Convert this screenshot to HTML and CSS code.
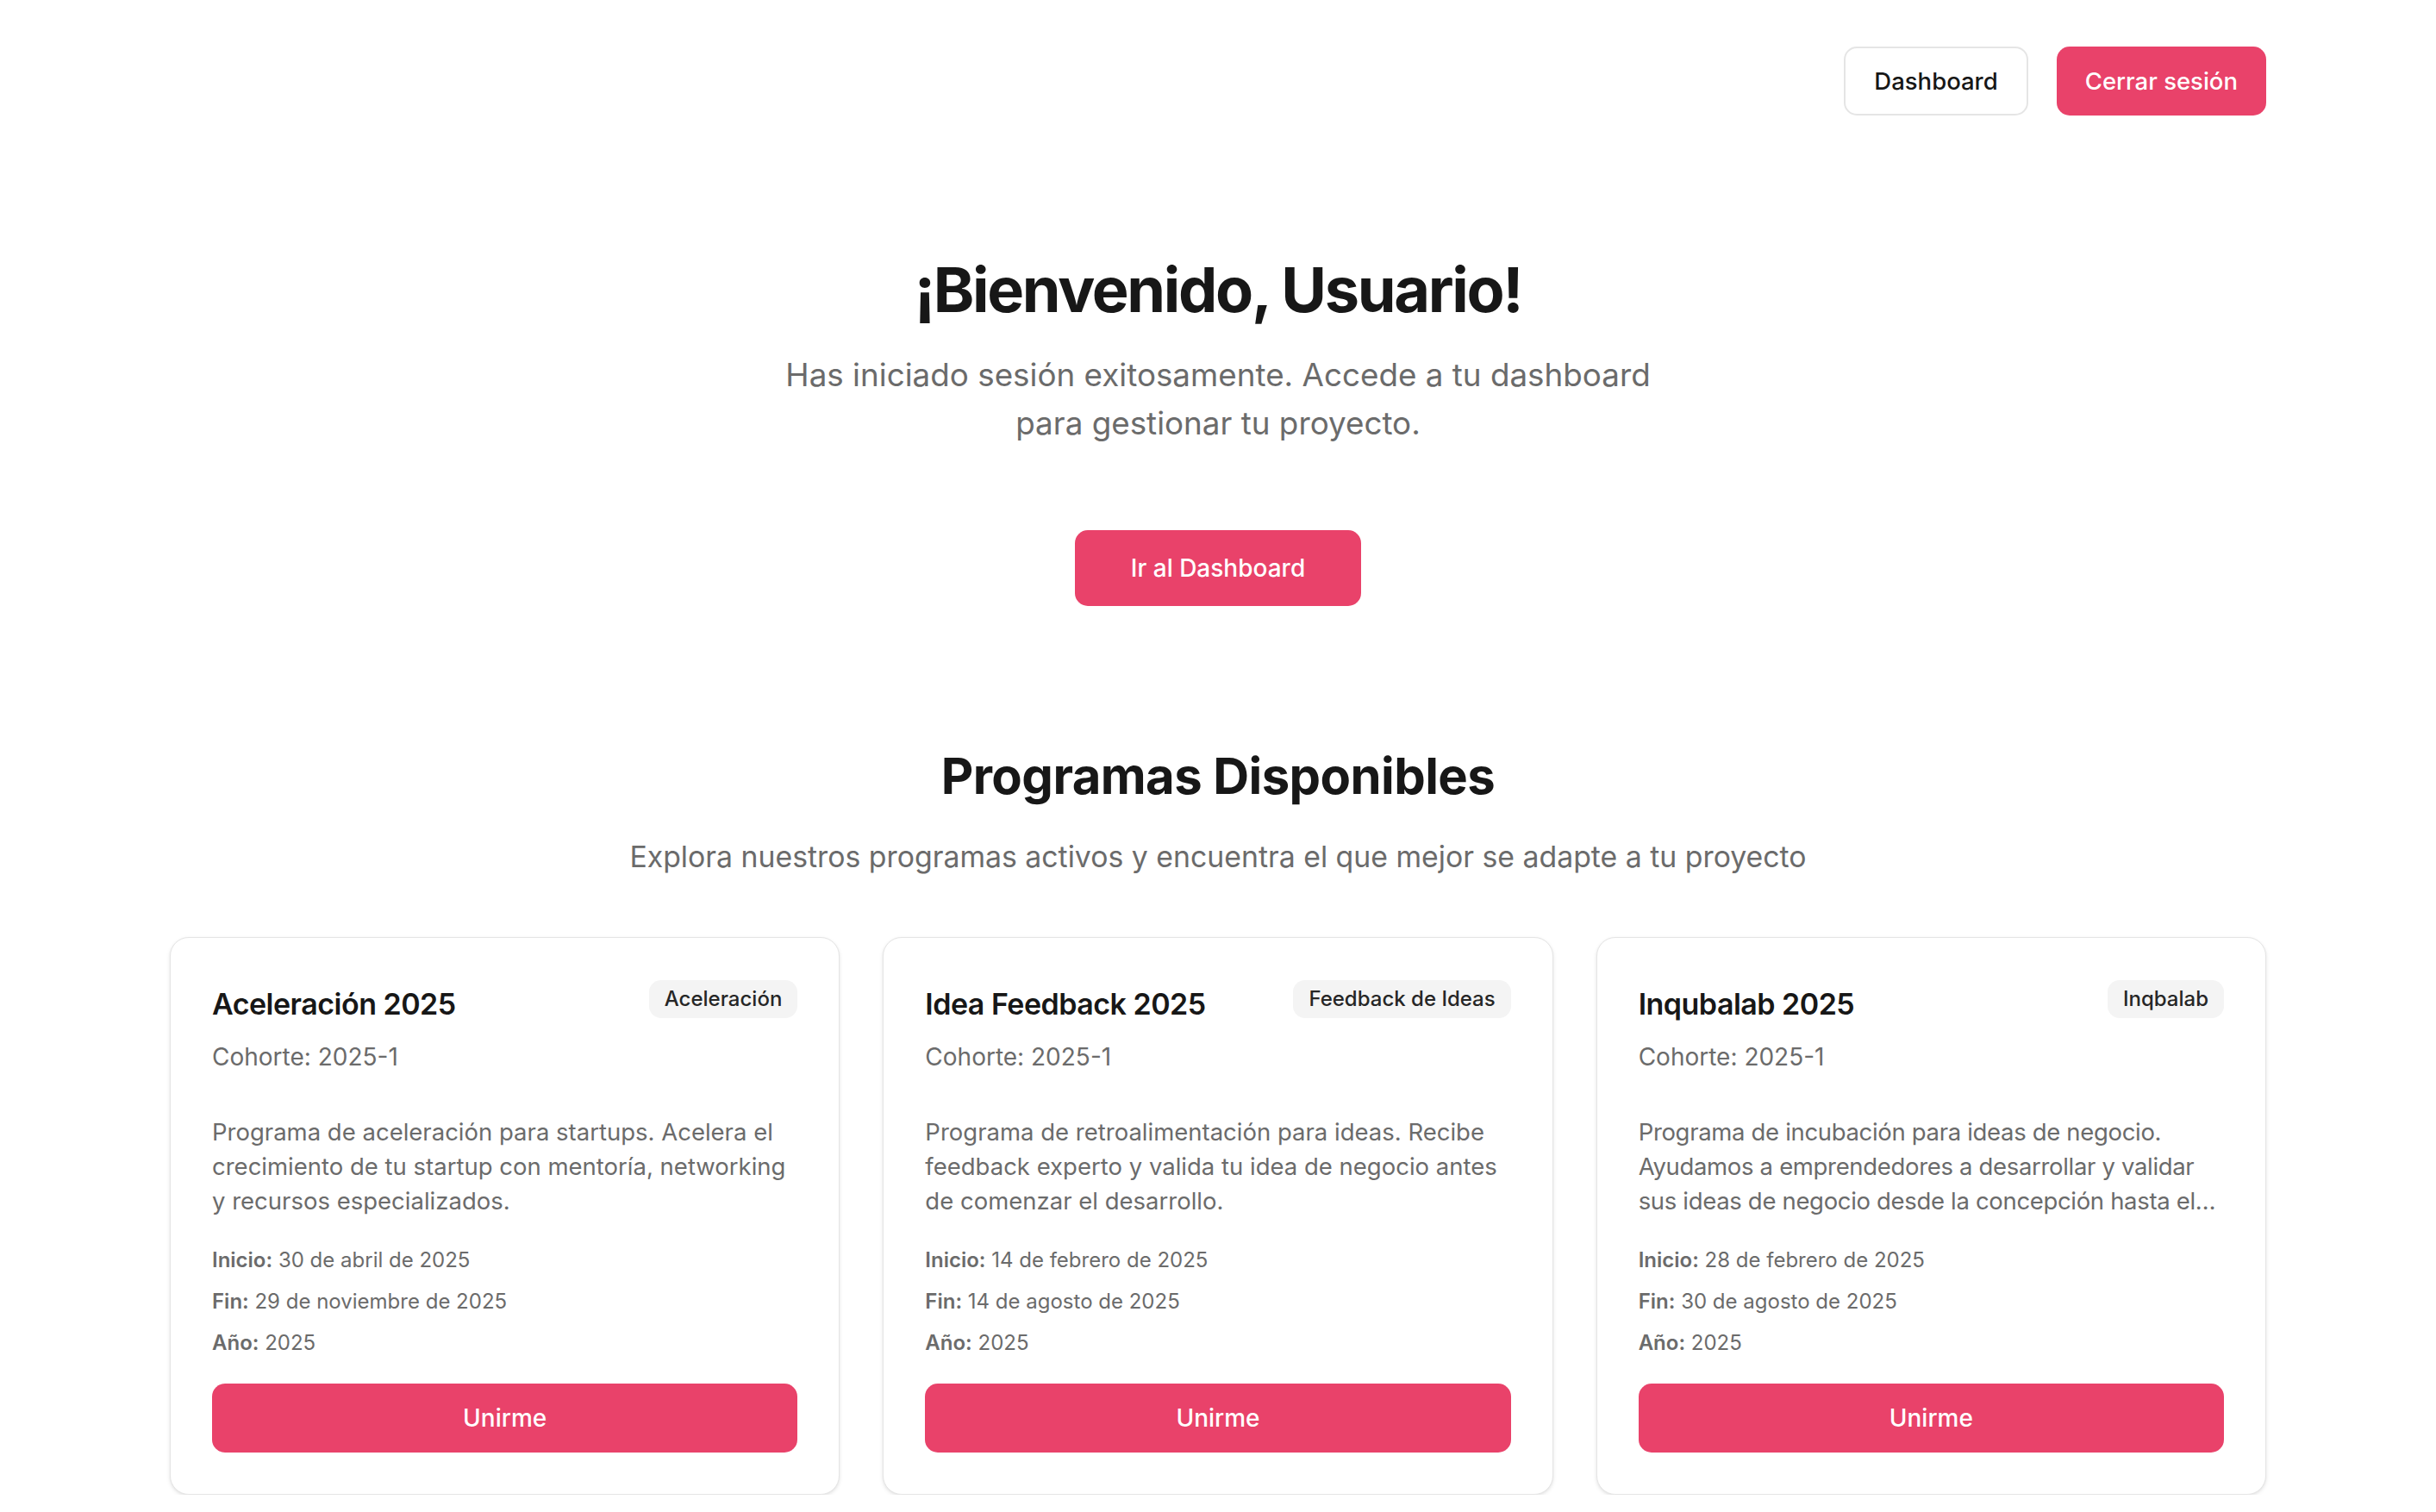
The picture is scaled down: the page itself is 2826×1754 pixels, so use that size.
FILE: index.html
```html
<!DOCTYPE html>
<html lang="es">
<head>
<meta charset="utf-8">
<title>Bienvenido</title>
<link rel="stylesheet" href="styles.css">
</head>
<body>
<div class="page">
  <header class="topbar">
    <a class="btn btn-outline" href="#">Dashboard</a>
    <a class="btn btn-primary" href="#">Cerrar sesión</a>
  </header>

  <section class="hero">
    <h1 class="hero-title">¡Bienvenido, Usuario!</h1>
    <p class="hero-text">Has iniciado sesión exitosamente. Accede a tu dashboard para gestionar tu proyecto.</p>
    <a class="btn btn-primary hero-cta" href="#">Ir al Dashboard</a>
  </section>

  <section class="programs">
    <h2 class="programs-title">Programas Disponibles</h2>
    <p class="programs-text">Explora nuestros programas activos y encuentra el que mejor se adapte a tu proyecto</p>

    <div class="cards">
      <article class="card">
        <div class="card-head">
          <h3 class="card-title">Aceleración 2025</h3>
          <span class="badge">Aceleración</span>
        </div>
        <p class="cohort">Cohorte: 2025-1</p>
        <p class="desc">Programa de aceleración para startups. Acelera el crecimiento de tu startup con mentoría, networking y recursos especializados.</p>
        <div class="meta">
          <p><strong>Inicio:</strong> 30 de abril de 2025</p>
          <p><strong>Fin:</strong> 29 de noviembre de 2025</p>
          <p><strong>Año:</strong> 2025</p>
        </div>
        <a class="btn btn-primary join" href="#">Unirme</a>
      </article>

      <article class="card">
        <div class="card-head">
          <h3 class="card-title">Idea Feedback 2025</h3>
          <span class="badge">Feedback de Ideas</span>
        </div>
        <p class="cohort">Cohorte: 2025-1</p>
        <p class="desc">Programa de retroalimentación para ideas. Recibe feedback experto y valida tu idea de negocio antes de comenzar el desarrollo.</p>
        <div class="meta">
          <p><strong>Inicio:</strong> 14 de febrero de 2025</p>
          <p><strong>Fin:</strong> 14 de agosto de 2025</p>
          <p><strong>Año:</strong> 2025</p>
        </div>
        <a class="btn btn-primary join" href="#">Unirme</a>
      </article>

      <article class="card">
        <div class="card-head">
          <h3 class="card-title">Inqubalab 2025</h3>
          <span class="badge">Inqbalab</span>
        </div>
        <p class="cohort">Cohorte: 2025-1</p>
        <p class="desc desc-long">Programa de incubación para ideas de negocio. Ayudamos a emprendedores a desarrollar y validar sus ideas de negocio desde la concepción hasta el lanzamiento al mercado.</p>
        <div class="meta">
          <p><strong>Inicio:</strong> 28 de febrero de 2025</p>
          <p><strong>Fin:</strong> 30 de agosto de 2025</p>
          <p><strong>Año:</strong> 2025</p>
        </div>
        <a class="btn btn-primary join" href="#">Unirme</a>
      </article>
    </div>
  </section>
</div>
</body>
</html>
```

FILE: styles.css
```css
* { box-sizing: border-box; }

html, body {
  margin: 0;
  padding: 0;
  background: #ffffff;
}

body {
  font-family: Inter, "Noto Sans", "Liberation Sans", sans-serif;
  color: #171717;
  -webkit-font-smoothing: antialiased;
}

.page {
  width: 2432px;
  margin: 0 auto;
}

/* Top bar */
.topbar {
  display: flex;
  justify-content: flex-end;
  gap: 33px;
  padding-top: 54px;
}

.btn {
  display: inline-flex;
  align-items: center;
  justify-content: center;
  height: 80px;
  padding: 0 33px;
  border-radius: 15px;
  font-size: 28px;
  font-weight: 500;
  text-decoration: none;
  white-space: nowrap;
}

.topbar .btn {
  font-size: 27.5px;
}

.btn-outline {
  background: #ffffff;
  color: #171717;
  border: 2px solid #e5e5e5;
}

.btn-primary {
  background: #e9426a;
  color: #ffffff;
}

/* Hero */
.hero {
  text-align: center;
  margin-top: 162px;
}

.hero-title {
  margin: 0;
  font-size: 72px;
  line-height: 80px;
  font-weight: 700;
  letter-spacing: -0.032em;
  color: #171717;
}

.hero-text {
  max-width: 1060px;
  margin: 31px auto 0;
  font-size: 36.8px;
  line-height: 56px;
  color: #6b6b6b;
}

.hero-cta {
  margin-top: 96px;
  height: 88px;
  padding: 0 65px;
}

/* Programs */
.programs {
  margin-top: 165px;
  text-align: center;
}

.programs-title {
  margin: 0;
  font-size: 58px;
  line-height: 64px;
  font-weight: 700;
  letter-spacing: -0.01em;
  color: #171717;
}

.programs-text {
  margin: 35px 0 0;
  font-size: 33.8px;
  line-height: 54px;
  color: #6b6b6b;
}

.cards {
  display: grid;
  grid-template-columns: repeat(3, 1fr);
  gap: 50px;
  margin-top: 66px;
  text-align: left;
}

.card {
  display: flex;
  flex-direction: column;
  background: #ffffff;
  border: 1px solid #e5e5e5;
  border-radius: 22px;
  padding: 48px;
  box-shadow: 0 2px 5px rgba(0, 0, 0, 0.08), 0 1px 3px rgba(0, 0, 0, 0.05);
}

.card-head {
  display: flex;
  justify-content: space-between;
  align-items: flex-start;
  gap: 16px;
}

.card-title {
  margin: 0;
  font-size: 34px;
  line-height: 58px;
  font-weight: 600;
  letter-spacing: -0.015em;
  color: #171717;
}

.badge {
  flex-shrink: 0;
  margin-top: 1px;
  height: 44px;
  line-height: 44px;
  padding: 0 18px;
  border-radius: 14px;
  background: #f4f4f4;
  color: #262626;
  font-size: 24px;
  font-weight: 500;
}

.cohort {
  margin: 12px 0 0;
  font-size: 28px;
  line-height: 40px;
  color: #6b6b6b;
}

.desc {
  margin: 47px 0 0;
  font-size: 27.5px;
  line-height: 40px;
  color: #6b6b6b;
  display: -webkit-box;
  -webkit-box-orient: vertical;
  -webkit-line-clamp: 3;
  overflow: hidden;
}

.desc-long {
  letter-spacing: -0.012em;
}

.meta {
  display: flex;
  flex-direction: column;
  gap: 16px;
  margin-top: 33px;
}

.meta p {
  margin: 0;
  font-size: 24px;
  line-height: 32px;
  color: #6b6b6b;
}

.meta strong {
  font-weight: 600;
}

.join {
  margin-top: 31px;
  width: 100%;
  height: 80px;
  font-size: 28px;
}
```
